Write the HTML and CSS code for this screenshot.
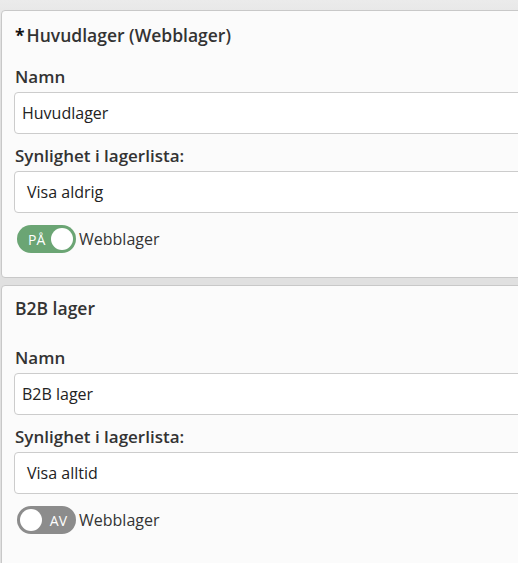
FILE: index.html
```html
<!DOCTYPE html>
<html lang="sv">
<head>
<meta charset="UTF-8" />
<title>Lager</title>
<link rel="stylesheet" href="styles.css">
</head>
<body>

<div class="panel">
  <h3 class="panel-title"><span class="star">*</span>Huvudlager (Webblager)</h3>
  <label class="field-label">Namn</label>
  <div class="input">Huvudlager</div>
  <label class="field-label">Synlighet i lagerlista:</label>
  <div class="select">Visa aldrig</div>
  <div class="toggle-row">
    <span class="toggle on"><span class="toggle-text">PÅ</span><span class="knob"></span></span>
    <span class="toggle-label">Webblager</span>
  </div>
</div>

<div class="panel second">
  <h3 class="panel-title">B2B lager</h3>
  <label class="field-label">Namn</label>
  <div class="input">B2B lager</div>
  <label class="field-label">Synlighet i lagerlista:</label>
  <div class="select">Visa alltid</div>
  <div class="toggle-row">
    <span class="toggle off"><span class="knob"></span><span class="toggle-text">AV</span></span>
    <span class="toggle-label">Webblager</span>
  </div>
</div>

</body>
</html>
```

FILE: styles.css
```css
html, body {
  margin: 0; padding: 0;
  overflow: hidden;
}
body {
  background: linear-gradient(#ebebeb, #e0e0e0 40px, #e0e0e0);
  font-family: 'Open Sans', 'Noto Sans', sans-serif;
  color: #333;
  padding: 10px 0 0 1px;
  height: 563px;
  box-sizing: border-box;
}
.panel {
  width: 620px;
  background: #fbfbfb;
  border: 1px solid #c8c8c8;
  border-radius: 4px;
  padding: 12px 12px 24px 12px;
  box-sizing: border-box;
  display: flex;
  flex-direction: column;
  align-items: flex-start;
}
.panel.second {
  margin-top: 7px;
  padding-top: 10px;
  min-height: 300px;
}
.panel-title {
  margin: 0 0 19px 1px;
  font-size: 17.5px;
  line-height: 24px;
  font-weight: 600;
}
.second .panel-title {
  margin-bottom: 27px;
}
.star {
  color: #111;
  font-weight: 700;
  margin-right: 2px;
}
.field-label {
  font-size: 17px;
  line-height: 22px;
  font-weight: 600;
  margin: 0 0 4px 1px;
}
.input, .select {
  align-self: stretch;
  height: 42px;
  box-sizing: border-box;
  border: 1px solid #ccc;
  border-radius: 4px;
  background: #fff;
  font-size: 16px;
  line-height: 40px;
  padding: 0 7px;
  margin-bottom: 11px;
  color: #222;
}
.select {
  padding-left: 12px;
  margin-bottom: 12px;
}
.toggle-row {
  display: flex;
  align-items: center;
  gap: 3px;
  margin-left: 3px;
}
.toggle {
  display: flex;
  align-items: center;
  justify-content: space-between;
  width: 59px;
  height: 28px;
  border-radius: 14px;
  box-sizing: border-box;
  padding: 0 3px;
}
.toggle.on {
  background: #6ba574;
  padding-left: 11px;
}
.toggle.off {
  background: #8c8c8c;
  padding-right: 9px;
}
.toggle-text {
  color: #fff;
  font-size: 14px;
}
.knob {
  width: 22px;
  height: 22px;
  border-radius: 50%;
  background: #fff;
}
.toggle-label {
  font-size: 16px;
  color: #333;
}
```
